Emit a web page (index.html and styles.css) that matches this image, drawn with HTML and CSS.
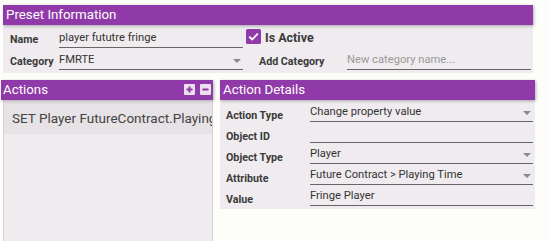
FILE: index.html
```html
<!DOCTYPE html>
<html>
<head>
<meta charset="utf-8">
<link rel="stylesheet" href="styles.css">
</head>
<body>
<div class="page">
  <section class="preset">
    <div class="head">Preset Information</div>
    <div class="preset-body">
      <div class="row row1">
        <span class="lbl w49">Name</span>
        <div class="field w184"><span>player fututre fringe</span></div>
        <span class="check"><svg width="15" height="15" viewBox="0 0 15 15"><rect width="15" height="15" rx="1.5" fill="#9039a9"/><path d="M3.2 7.6 L6.2 10.5 L11.8 4.6" fill="none" stroke="#fff" stroke-width="1.8"/></svg></span>
        <span class="active">Is Active</span>
      </div>
      <div class="row row2">
        <span class="lbl w49">Category</span>
        <div class="field w184 select"><span>FMRTE</span><i class="arrow"></i></div>
        <span class="lbl addcat">Add Category</span>
        <div class="field w184"><span class="ph">New category name...</span></div>
      </div>
    </div>
  </section>
  <div class="lower">
    <section class="actions">
      <div class="head head-actions">
        <span>Actions</span>
        <span class="btns">
          <span class="btn"><svg width="11" height="11" viewBox="0 0 11 11"><path d="M5.5 2.5v6M2.5 5.5h6" stroke="#9039a9" stroke-width="2"/></svg></span>
          <span class="btn"><svg width="11" height="11" viewBox="0 0 11 11"><path d="M2.5 5.5h6" stroke="#9039a9" stroke-width="2"/></svg></span>
        </span>
      </div>
      <div class="actions-body">
        <div class="item">SET Player FutureContract.PlayingTime</div>
      </div>
    </section>
    <section class="details">
      <div class="head">Action Details</div>
      <div class="details-body">
        <div class="drow"><span class="lbl w84">Action Type</span><div class="field w223 select"><span>Change property value</span><i class="arrow"></i></div></div>
        <div class="drow"><span class="lbl w84">Object ID</span><div class="field w223"><span></span></div></div>
        <div class="drow"><span class="lbl w84">Object Type</span><div class="field w223 select"><span>Player</span><i class="arrow"></i></div></div>
        <div class="drow"><span class="lbl w84">Attribute</span><div class="field w223 select"><span>Future Contract &gt; Playing Time</span><i class="arrow"></i></div></div>
        <div class="drow"><span class="lbl w84">Value</span><div class="field w223"><span>Fringe Player</span></div></div>
      </div>
    </section>
  </div>
</div>
</body>
</html>
```

FILE: styles.css
```css
* { box-sizing: border-box; }
html, body { margin: 0; padding: 0; }
body {
  background: #fdfdf9;
  font-family: Roboto, "Noto Sans", sans-serif;
  color: #333;
  width: 550px;
  height: 241px;
  overflow: hidden;
}
.page { padding-top: 5px; }
.head {
  height: 20px;
  background: #9039a9;
  color: #fff;
  font-size: 13.3px;
  line-height: 20px;
  padding-left: 3px;
  box-shadow: 1px 1px 3px rgba(0,0,0,0.3);
  position: relative;
  z-index: 1;
}
.preset { width: 530px; margin-left: 3px; }
.preset-body {
  background: #efebee;
  height: 48px;
  padding: 5px 2px 0 7px;
}
.row { display: flex; align-items: center; height: 18px; }
.row2 { margin-top: 4px; }
.lbl { font-size: 10.7px; font-weight: 700; color: #3a3a3a; flex: none; }
.w49 { width: 49px; }
.w84 { width: 84px; }
.w184 { width: 184px; }
.w223 { width: 223px; }
.field {
  flex: none;
  height: 18px;
  border-bottom: 1px solid #666;
  font-size: 11.2px;
  line-height: 15px;
  color: #333;
  padding-left: 0;
  position: relative;
  white-space: nowrap;
  overflow: hidden;
}
.ph { color: #9a9a9a; }
.arrow {
  position: absolute;
  right: 2px;
  top: 7px;
  width: 0; height: 0;
  border-left: 4px solid transparent;
  border-right: 4px solid transparent;
  border-top: 4px solid #8a8a8a;
}
.check { margin-left: 3px; align-self: flex-start; margin-top: -1px; height: 15px; }
.check svg { display: block; }
.active { margin-left: 4px; font-size: 12.5px; font-weight: 700; color: #3a3a3a; margin-top: -4px; }
.addcat { margin-left: 16px; width: 88px; }
.lower { display: flex; margin-top: 7px; margin-left: 1px; gap: 7px; align-items: flex-start; }
.actions { width: 212px; }
.head-actions { display: flex; justify-content: space-between; padding-left: 2px; padding-right: 2px; }
.btns { display: flex; gap: 5px; align-items: center; margin-top: -1px; }
.btn { width: 11px; height: 11px; background: #ecdff0; border-radius: 1px; display: block; }
.btn svg { display: block; }
.actions-body {
  margin-left: 2px;
  height: 150px;
  background: #efebee;
  border-left: 1px solid #d6d3d5;
  border-right: 1px solid #d6d3d5;
  padding-top: 2px;
}
.item {
  height: 32px;
  background: #e6e2e5;
  font-size: 13.5px;
  line-height: 32px;
  padding-left: 8px;
  white-space: nowrap;
  overflow: hidden;
  color: #444;
}
.details { width: 315px; }
.details-body {
  background: #efebee;
  padding: 4px 2px 3px 6px;
}
.drow { display: flex; align-items: center; height: 18px; }
.drow + .drow { margin-top: 3px; }
.drow .lbl { margin-top: 4px; }
```
